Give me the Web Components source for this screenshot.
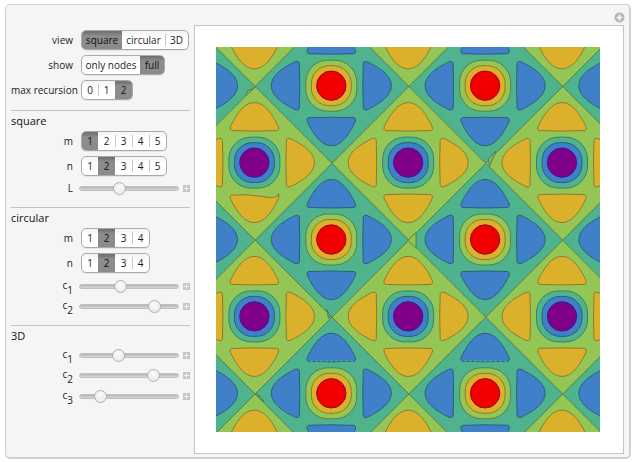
<!DOCTYPE html>
<html>
<head>
<meta charset="utf-8">
<style>
  html, body { margin: 0; background: #fff; }
  body { font-family: "Open Sans", "DejaVu Sans", sans-serif; font-size: 10px; color: #222; }
</style>
</head>
<body>
<m-panel>
  <m-row label="view">
    <m-setter>
      <m-seg on style="width:40px">square</m-seg>
      <m-seg style="width:43px">circular</m-seg>
      <m-seg sep style="width:23px">3D</m-seg>
    </m-setter>
  </m-row>
  <m-row label="show">
    <m-setter>
      <m-seg style="width:58px">only nodes</m-seg>
      <m-seg on style="width:24px">full</m-seg>
    </m-setter>
  </m-row>
  <m-row label="max recursion">
    <m-setter>
      <m-seg style="width:16px">0</m-seg>
      <m-seg sep style="width:17px">1</m-seg>
      <m-seg on style="width:17px">2</m-seg>
    </m-setter>
  </m-row>

  <m-section heading="square" style="margin-top:10px">
    <m-row label="m">
      <m-setter>
        <m-seg on style="width:16px">1</m-seg>
        <m-seg style="width:17px">2</m-seg>
        <m-seg sep style="width:17px">3</m-seg>
        <m-seg sep style="width:17px">4</m-seg>
        <m-seg sep style="width:17px">5</m-seg>
      </m-setter>
    </m-row>
    <m-row label="n">
      <m-setter>
        <m-seg style="width:16px">1</m-seg>
        <m-seg on style="width:17px">2</m-seg>
        <m-seg style="width:17px">3</m-seg>
        <m-seg sep style="width:17px">4</m-seg>
        <m-seg sep style="width:17px">5</m-seg>
      </m-setter>
    </m-row>
    <m-row label="L" style="margin-top:2px"><m-slider at="40"></m-slider></m-row>
  </m-section>

  <m-section heading="circular">
    <m-row label="m">
      <m-setter>
        <m-seg style="width:16px">1</m-seg>
        <m-seg on style="width:17px">2</m-seg>
        <m-seg style="width:17px">3</m-seg>
        <m-seg sep style="width:17px">4</m-seg>
      </m-setter>
    </m-row>
    <m-row label="n">
      <m-setter>
        <m-seg style="width:16px">1</m-seg>
        <m-seg on style="width:17px">2</m-seg>
        <m-seg style="width:17px">3</m-seg>
        <m-seg sep style="width:17px">4</m-seg>
      </m-setter>
    </m-row>
    <m-row label="c" sub="1" style="margin-top:3px"><m-slider at="41"></m-slider></m-row>
    <m-row label="c" sub="2" style="margin-top:0"><m-slider at="75"></m-slider></m-row>
  </m-section>

  <m-section heading="3D">
    <m-row label="c" sub="1" style="margin-top:4px"><m-slider at="39"></m-slider></m-row>
    <m-row label="c" sub="2" style="margin-top:0"><m-slider at="74"></m-slider></m-row>
    <m-row label="c" sub="3" style="margin-top:1px"><m-slider at="21"></m-slider></m-row>
  </m-section>

  <m-plot slot="plot"></m-plot>
</m-panel>

<script>
class MPanel extends HTMLElement {
  constructor() {
    super();
    this.attachShadow({ mode: 'open' });
    this.shadowRoot.innerHTML = `
      <style>
        :host {
          display: flex;
          box-sizing: border-box;
          width: 626px;
          height: 455px;
          margin: 4px 0 0 5px;
          background: #f5f5f5;
          border: 1px solid #d0d0d0;
          border-width: 1px 2px 2px 1px;
          border-radius: 5px;
          position: relative;
        }
        .controls {
          width: 179px;
          padding: 20px 0 0 5px;
          flex: none;
        }
        .pane {
          box-sizing: border-box;
          width: 430px;
          height: 429px;
          margin: 20px 0 0 4px;
          background: #fff;
          border: 1px solid #c4c4c4;
          flex: none;
        }
        .more {
          position: absolute;
          right: 4px;
          top: 7px;
          width: 11px;
          height: 11px;
        }
      </style>
      <div class="controls"><slot></slot></div>
      <div class="pane"><slot name="plot"></slot></div>
      <svg class="more" viewBox="0 0 11 11">
        <circle cx="5.5" cy="5.5" r="5" fill="#b4b4b4"/>
        <path d="M5.5 2.5v6M2.5 5.5h6" stroke="#fff" stroke-width="1.6"/>
      </svg>`;
  }
}

class MRow extends HTMLElement {
  constructor() {
    super();
    this.attachShadow({ mode: 'open' });
    this.shadowRoot.innerHTML = `
      <style>
        :host {
          display: grid;
          grid-template-columns: 62px auto;
          column-gap: 8px;
          align-items: center;
          height: 20px;
          margin-top: 5px;
          color: #222;
        }
        .label { text-align: right; white-space: nowrap; font-size: 10px; line-height: 12px; }
        sub { font-size: 10px; line-height: 0; vertical-align: -3px; }
        .c { vertical-align: 2px; }
      </style>
      <div class="label"></div>
      <slot></slot>`;
  }

  connectedCallback() {
    const label = this.getAttribute('label') || '';
    const sub = this.getAttribute('sub');
    this.shadowRoot.querySelector('.label').innerHTML =
      sub ? `<span class="c">${label}</span><sub>${sub}</sub>` : label;
  }
}

class MSetter extends HTMLElement {
  constructor() {
    super();
    this.attachShadow({ mode: 'open' });
    this.shadowRoot.innerHTML = `
      <style>
        :host {
          display: inline-flex;
          justify-self: start;
          height: 20px;
          box-sizing: border-box;
          border: 1px solid #a9a9a9;
          border-radius: 5px;
          background: linear-gradient(#f4f4f4, #fff 40%, #fff);
          overflow: hidden;
          box-shadow: 0 1px 0 #e4e4e4;
        }
      </style>
      <slot></slot>`;
  }
}

class MSeg extends HTMLElement {
  constructor() {
    super();
    this.attachShadow({ mode: 'open' });
    this.shadowRoot.innerHTML = `
      <style>
        :host {
          display: flex;
          align-items: center;
          justify-content: center;
          box-sizing: border-box;
          height: 100%;
          font-size: 10px;
          color: #1c1c1c;
          white-space: nowrap;
        }
        :host([sep]) {
          background: linear-gradient(#c8c8c8, #c8c8c8) left center / 1px 12px no-repeat;
        }
        :host([on]) {
          background: linear-gradient(#6e6e6e, #8e8e8e 30%, #8a8a8a);
          color: #111;
        }
      </style>
      <slot></slot>`;
  }
}

class MSlider extends HTMLElement {
  constructor() {
    super();
    this.attachShadow({ mode: 'open' });
    this.shadowRoot.innerHTML = `
      <style>
        :host {
          display: flex;
          align-items: center;
          gap: 4px;
          margin-left: -2px;
        }
        .track {
          position: relative;
          box-sizing: border-box;
          width: 100px;
          height: 5px;
          border-radius: 3px;
          background: linear-gradient(#b4b4b4, #d8d8d8);
          border: 1px solid #c0c0c0;
        }
        .thumb {
          position: absolute;
          top: -5px;
          width: 13px;
          height: 13px;
          margin-left: -7px;
          box-sizing: border-box;
          border-radius: 50%;
          border: 1px solid #b0b0b0;
          background: radial-gradient(circle at 50% 35%, #fbfbfb, #e6e6e6);
        }
        svg { width: 7px; height: 7px; flex: none; }
      </style>
      <div class="track"><div class="thumb"></div></div>
      <svg viewBox="0 0 7 7">
        <rect width="7" height="7" fill="#c6c6c6"/>
        <path d="M3.5 1v5M1 3.5h5" stroke="#f5f5f5" stroke-width="1"/>
      </svg>`;
  }

  connectedCallback() {
    this.shadowRoot.querySelector('.thumb').style.left = (this.getAttribute('at') || 0) + 'px';
  }
}

class MSection extends HTMLElement {
  constructor() {
    super();
    this.attachShadow({ mode: 'open' });
    this.shadowRoot.innerHTML = `
      <style>
        :host {
          display: block;
          width: 179px;
          margin-top: 9px;
          border-top: 1px solid #c2c2c2;
        }
        .heading {
          height: 14px;
          margin-top: 3px;
          margin-bottom: -2px;
          font-size: 11px;
          line-height: 14px;
          color: #111;
        }
      </style>
      <div class="heading"></div>
      <slot></slot>`;
  }

  connectedCallback() {
    this.shadowRoot.querySelector('.heading').textContent = this.getAttribute('heading') || '';
  }
}

// the plot repeats one cell, drawn in page coordinates so it is easy to compare
const PERIOD = 153.8;
const TEAL = '#4fb48e', GREEN = '#94c655', BLUE = '#3f80c8', YELLOW = '#dbb12c';
const RED = '#f20000', PURPLE = '#80008a';
const LOBE = 'M-23 32Q0 31 23 32Q25 33 24 36C20 44 12 60 0 60C-12 60-20 44-24 36Q-25 33-23 32Z';
const LOBE_WAVY = 'M-23 32.5Q-8 31 8 34T24 31Q25 33 24 36C20 44 12 60 0 60C-12 60-20 44-24 36Q-25 33-23 32.5Z';

// contour colour follows the region it closes
const EDGE = { [TEAL]: '#3c7f6a', [GREEN]: '#557f45', [BLUE]: '#2a6078', [YELLOW]: '#8c7a2c' };
const line = fill => `stroke="${EDGE[fill] || '#3c7f6a'}" stroke-width="1"`;

function cell(x, y, lobe, ring1, ring2, dot, dotEdge, first = LOBE) {
  let s = '';
  for (const a of [0, 90, 180, 270]) {
    s += `<path d="${a ? LOBE : first}" transform="translate(${x} ${y}) rotate(${a})" fill="${lobe}" ${line(lobe)}/>`;
  }
  s += `<rect x="${x - 25.5}" y="${y - 25.5}" width="51" height="51" rx="22" fill="${ring1}" ${line(ring1)}/>`;
  s += `<rect x="${x - 20}" y="${y - 20}" width="40" height="40" rx="18" fill="${ring2}" ${line(ring2)}/>`;
  s += `<circle cx="${x}" cy="${y}" r="14.7" fill="${dot}" stroke="${dotEdge}"/>`;
  return s;
}

// small numerical glitches of the contours, the parts that do not repeat
function glitches() {
  const poly = (pts, fill) => `<path d="M${pts}Z" fill="${fill}" ${line(GREEN)}/>`;
  return [
    poly('246 95.5 247.5 91 253 88.7 255.8 86.7', GREEN),
    poly('488.3 159 489.5 166 496 151', '#73bd72'),
    poly('408 240.4 416 232.4 416 248.4', GREEN),
    poly('326.5 309 328.5 318.5 330.5 317', TEAL),
    poly('257 393.5 259.5 399 264 401', TEAL),
    `<path d="M310 361H353M464 361H507" stroke="${TEAL}" stroke-width="1" stroke-dasharray="3 2" fill="none"/>`
  ].join('');
}

class MPlot extends HTMLElement {
  constructor() {
    super();
    this.attachShadow({ mode: 'open' });
    let diamonds = '', cells = '';
    const half = PERIOD / 2;
    for (let i = -1; i < 4; i++) {
      for (let j = -1; j < 4; j++) {
        const rx = 331.3 + (i - 1) * PERIOD, ry = 85.7 + j * PERIOD;
        const px = rx - half, py = ry + half;
        // the crossings sit a little off the cell centres
        const dx = px + 0.7, dy = py + 0.7;
        diamonds += `<path d="M${dx - half} ${dy}L${dx} ${dy - half}L${dx + half} ${dy}L${dx} ${dy + half}Z" fill="${GREEN}" ${line(GREEN)}/>`;
        cells += cell(rx, ry, BLUE, GREEN, YELLOW, RED, '#8a0a20');
        const wavy = i === 1 && j === 0 ? LOBE_WAVY : LOBE;
        cells += cell(px, py, YELLOW, TEAL, BLUE, PURPLE, '#30208a', wavy);
      }
    }
    this.shadowRoot.innerHTML = `
      <style>
        :host { display: block; padding: 21px 0 0 21px; }
        svg { display: block; width: 384px; height: 385px; }
      </style>
      <svg viewBox="216 47 384 385">
        <rect x="216" y="47" width="384" height="385" fill="${TEAL}"/>
        ${diamonds}
        ${cells}
        ${glitches()}
      </svg>`;
  }
}

customElements.define('m-panel', MPanel);
customElements.define('m-row', MRow);
customElements.define('m-setter', MSetter);
customElements.define('m-seg', MSeg);
customElements.define('m-slider', MSlider);
customElements.define('m-section', MSection);
customElements.define('m-plot', MPlot);
</script>
</body>
</html>
